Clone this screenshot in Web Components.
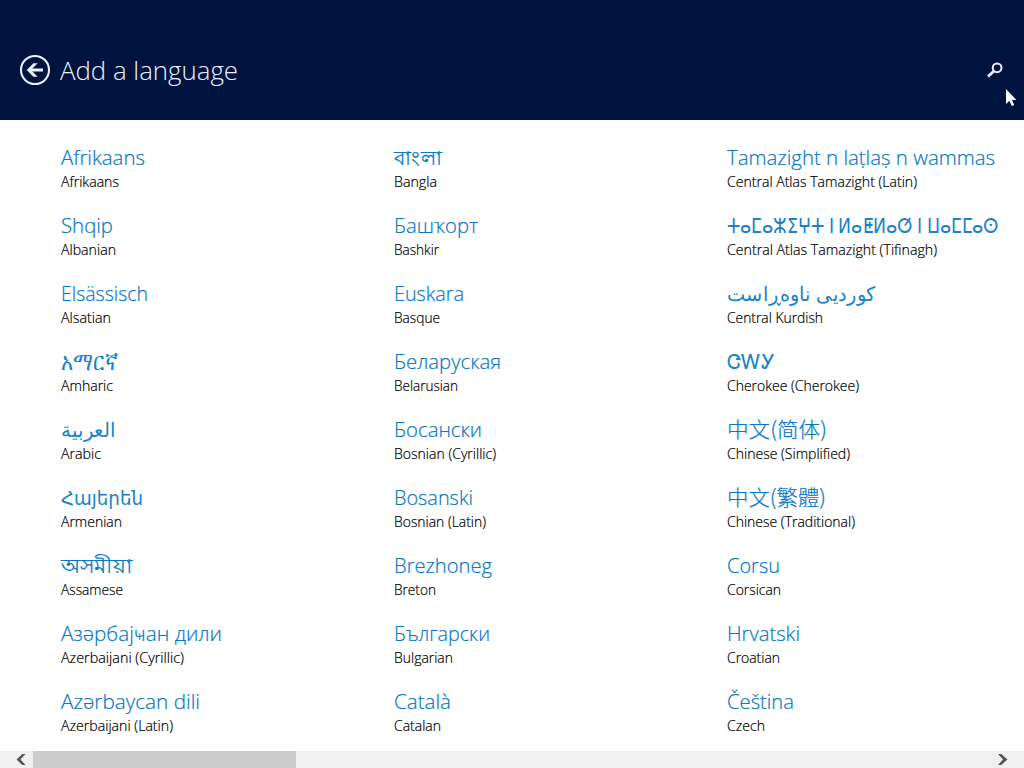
<!DOCTYPE html>
<html lang="en">
<head>
<meta charset="utf-8">
<title>Add a language</title>
<style>
    html, body {
        margin: 0;
        height: 100%;
        overflow: hidden;
    }
    body {
        background: #fff;
        font-family: "Open Sans", "Noto Sans", "DejaVu Sans", "Noto Sans CJK SC", sans-serif;
    }
</style>
</head>
<body>
<language-page></language-page>
<script>
class FitText extends HTMLElement {
    constructor() {
        super();
        this.attachShadow({mode: 'open'});
        this.shadowRoot.innerHTML = `
            <style>
                :host {
                    display: block;
                    white-space: nowrap;
                }
                span {
                    display: inline-block;
                    transform-origin: 0 50%;
                }
            </style>
            <span><slot></slot></span>
        `;
    }

    connectedCallback() {
        const span = this.shadowRoot.querySelector('span');
        const width = Number(this.getAttribute('width'));
        if(width && span.offsetWidth){
            const natural = span.getBoundingClientRect().width;
            span.style.transform = `scaleX(${width / natural})`;
        }
    }
}

class PageHeader extends HTMLElement {
    constructor() {
        super();
        this.attachShadow({mode: 'open'});
        this.shadowRoot.innerHTML = `
            <style>
                :host {
                    display: flex;
                    align-items: center;
                    box-sizing: border-box;
                    height: 120px;
                    padding: 20px 20px 0 19px;
                    background: #00133f;
                    color: #e9f0ff;
                    position: relative;
                }
                button {
                    display: block;
                    padding: 0;
                    border: 0;
                    background: none;
                    color: inherit;
                }
                svg {
                    display: block;
                }
                h1 {
                    flex: 1;
                    margin: 0 0 0 9px;
                    font-size: 26px;
                    line-height: 36px;
                    font-weight: 300;
                }
                #pointer {
                    position: absolute;
                    left: 1005px;
                    top: 88px;
                }
            </style>
            <button aria-label="Back">
                <svg width="32" height="32" viewBox="0 0 32 32" fill="none" stroke="currentColor">
                    <circle cx="16" cy="16" r="14" stroke-width="2.1"/>
                    <path d="M10 16H24" stroke-width="3"/>
                    <path d="M14.4 9.2H18.6L12 16L18.6 22.8H14.4L7.8 16Z" fill="currentColor" stroke="none"/>
                </svg>
            </button>
            <h1><fit-text width="178"><slot></slot></fit-text></h1>
            <button aria-label="Search">
                <svg width="18" height="18" viewBox="0 0 18 18" fill="none" stroke="currentColor">
                    <circle cx="11.1" cy="6.8" r="4.4" stroke-width="2"/>
                    <path d="M8 9.9L2 15.6" stroke-width="2.8"/>
                </svg>
            </button>
            <svg id="pointer" width="14" height="20" viewBox="0 0 14 20">
                <path d="M1 1V16L4.4 12.8L6.8 18L9.2 17L6.9 11.9H11.4Z" fill="#fff"/>
            </svg>
        `;
    }
}

class LanguageItem extends HTMLElement {
    constructor() {
        super();
        this.attachShadow({mode: 'open'});
    }

    connectedCallback() {
        this.shadowRoot.innerHTML = `
            <style>
                :host {
                    display: block;
                    height: 68px;
                }
                #native {
                    height: 28px;
                    font-size: 20px;
                    line-height: 28px;
                    font-weight: 300;
                    color: #0878c4;
                    -webkit-text-stroke: 0.2px;
                }
                #name {
                    height: 20px;
                    font-size: 14px;
                    line-height: 20px;
                    font-weight: 300;
                    color: #000;
                    -webkit-text-stroke: 0.2px;
                }
            </style>
            <fit-text id="native" width="${this.getAttribute('native-width')}"><slot name="native"></slot></fit-text>
            <fit-text id="name" width="${this.getAttribute('name-width')}"><slot></slot></fit-text>
        `;
    }
}

class ScrollBar extends HTMLElement {
    constructor() {
        super();
        this.attachShadow({mode: 'open'});
        this.shadowRoot.innerHTML = `
            <style>
                :host {
                    display: flex;
                    height: 17px;
                    background: #f0f0f0;
                }
                svg {
                    display: block;
                    width: 33px;
                    height: 17px;
                }
                #track {
                    flex: 1;
                }
                #thumb {
                    width: 263px;
                    height: 17px;
                    background: #cdcdcd;
                }
            </style>
            <svg viewBox="0 0 33 17"><path d="M22.3 3H25.5L20.5 8.5L25.5 14H22.3L16.5 8.5Z" fill="#555"/></svg>
            <div id="track"><div id="thumb"></div></div>
            <svg viewBox="0 0 33 17"><path d="M10.2 3H7L12 8.5L7 14H10.2L16.5 8.5Z" fill="#555"/></svg>
        `;
    }
}

// native name, width, english name, width, lang
const languages = [
    ['Afrikaans', 84, 'Afrikaans', 58, 'af'],
    ['Shqip', 52, 'Albanian', 55, 'sq'],
    ['Elsässisch', 87, 'Alsatian', 50, 'gsw'],
    ['አማርኛ', 57, 'Amharic', 52, 'am'],
    ['العربية', 55, 'Arabic', 40, 'ar'],
    ['Հայերեն', 82, 'Armenian', 61, 'hy'],
    ['অসমীয়া', 72, 'Assamese', 62, 'as'],
    ['Азәрбајҹан дили', 161, 'Azerbaijani (Cyrillic)', 123, 'az-Cyrl'],
    ['Azərbaycan dili', 139, 'Azerbaijani (Latin)', 112, 'az'],
    ['বাংলা', 48, 'Bangla', 43, 'bn'],
    ['Башҡорт', 84, 'Bashkir', 45, 'ba'],
    ['Euskara', 70, 'Basque', 46, 'eu'],
    ['Беларуская', 107, 'Belarusian', 64, 'be'],
    ['Босански', 88, 'Bosnian (Cyrillic)', 102, 'bs-Cyrl'],
    ['Bosanski', 79, 'Bosnian (Latin)', 92, 'bs'],
    ['Brezhoneg', 98, 'Breton', 42, 'br'],
    ['Български', 96, 'Bulgarian', 59, 'bg'],
    ['Català', 57, 'Catalan', 47, 'ca'],
    ['Tamazight n laṭlaṣ n wammas', 268, 'Central Atlas Tamazight (Latin)', 190, 'tzm'],
    ['ⵜⴰⵎⴰⵣⵉⵖⵜ ⵏ ⵍⴰⵟⵍⴰⵚ ⵏ ⵡⴰⵎⵎⴰⵙ', 272, 'Central Atlas Tamazight (Tifinagh)', 210, 'tzm-Tfng'],
    ['کوردیی ناوەڕاست', 149, 'Central Kurdish', 96, 'ku'],
    ['ᏣᎳᎩ', 48, 'Cherokee (Cherokee)', 132, 'chr'],
    ['中文(简体)', 100, 'Chinese (Simplified)', 123, 'zh-Hans'],
    ['中文(繁體)', 99, 'Chinese (Traditional)', 128, 'zh-Hant'],
    ['Corsu', 53, 'Corsican', 54, 'co'],
    ['Hrvatski', 73, 'Croatian', 53, 'hr'],
    ['Čeština', 67, 'Czech', 38, 'cs']
];

class LanguagePage extends HTMLElement {
    constructor() {
        super();
        this.attachShadow({mode: 'open'});
        const items = languages.map(([native, nativeWidth, name, nameWidth, lang]) => `
            <language-item native-width="${nativeWidth}" name-width="${nameWidth}">
                <span slot="native" lang="${lang}">${native}</span>${name}
            </language-item>
        `).join('');

        this.shadowRoot.innerHTML = `
            <style>
                :host {
                    display: flex;
                    flex-direction: column;
                    height: 100vh;
                }
                main {
                    flex: 1;
                    min-height: 0;
                    display: grid;
                    grid-template-rows: repeat(9, 68px);
                    grid-auto-flow: column;
                    grid-auto-columns: 333px;
                    padding: 24px 0 0 61px;
                    box-sizing: border-box;
                    overflow: hidden;
                }
                [lang="zh-Hans"], [lang="zh-Hant"] {
                    display: block;
                    height: 28px;
                    line-height: 23px;
                    font-family: "Noto Sans CJK SC", sans-serif;
                    font-size: 21px;
                }
                [lang="zh-Hant"] {
                    font-family: "Noto Sans CJK TC", sans-serif;
                }
                [lang="am"] {
                    display: block;
                    height: 28px;
                    line-height: 25px;
                    font-size: 25px;
                }
                [lang="hy"] {
                    font-family: "DejaVu Sans", sans-serif;
                    font-weight: 400;
                    font-size: 19px;
                }
                /* fallback faces for these scripts come heavier than the Latin one */
                [lang="am"], [lang="ar"], [lang="ku"], [lang="chr"], [lang="tzm-Tfng"], [lang="hy"] {
                    color: #1a82c8;
                    -webkit-text-stroke: 0;
                }
            </style>
            <page-header>Add a language</page-header>
            <main>${items}</main>
            <scroll-bar></scroll-bar>
        `;
    }
}

customElements.define('language-page', LanguagePage);
customElements.define('page-header', PageHeader);
customElements.define('language-item', LanguageItem);
customElements.define('scroll-bar', ScrollBar);
customElements.define('fit-text', FitText);
</script>
</body>
</html>
